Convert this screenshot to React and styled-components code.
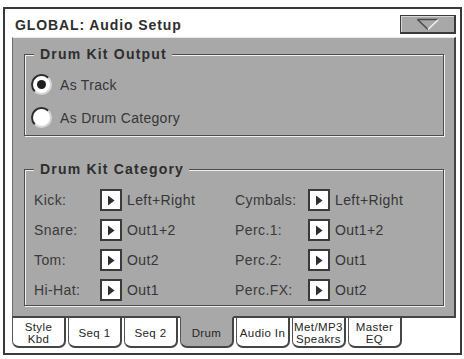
import styled, { createGlobalStyle } from "styled-components"

const GlobalStyle = createGlobalStyle`
  html, body {
    margin: 0;
    padding: 0;
    background: #fff;
  }

  body {
    font-family: "Liberation Sans", Arial, sans-serif;
    color: #363636;
  }
`

const PANEL_GRAY = "#a8a8a8"

const Screen = styled.div`
  width: 464px;
  height: 359px;
  box-sizing: border-box;
  padding: 7px 2px 0 3px;
`

const Frame = styled.div`
  width: 459px;
  height: 348px;
  box-sizing: border-box;
  border: 2px solid #3a3a3a;
  background: #fff;
  display: flex;
  flex-direction: column;
`

const Header = styled.header`
  height: 28px;
  flex-shrink: 0;
  display: flex;
  align-items: flex-start;
  justify-content: space-between;
  padding: 0 4px 0 10px;
`

const Title = styled.h1`
  margin: 8px 0 0;
  font-size: 14px;
  line-height: 16px;
  font-weight: bold;
  letter-spacing: 0.9px;
  color: #2e2e2e;
`

const MenuButton = styled.button`
  width: 56px;
  height: 19px;
  margin-top: 6px;
  padding: 0;
  box-sizing: border-box;
  background: ${PANEL_GRAY};
  border: 1px solid #3a3a3a;
  border-right-width: 2px;
  border-bottom-width: 2px;
  box-shadow: inset 1px 1px 0 #d8d8d8;
  display: flex;
  align-items: center;
  justify-content: center;
`

const Panel = styled.main`
  height: 281px;
  flex-shrink: 0;
  box-sizing: border-box;
  margin: 0 4px 0 7px;
  background: ${PANEL_GRAY};
  border-top: 1px solid #e8e8e8;
  border-left: 1px solid #6c6c6c;
  border-right: 2px solid #454545;
  border-bottom: 2px solid #454545;
  padding: 8px 10px 0 11px;
  display: flex;
  flex-direction: column;
`

const Group = styled.fieldset`
  margin: ${(p) => (p.$first ? "0" : "25px 0 0")};
  padding: ${(p) => p.$pad};
  min-width: 0;
  border: 1px solid #4c4c4c;
  box-shadow: inset 1px 1px 0 #f0f0f0, 1px 1px 0 #f0f0f0;
`

const Legend = styled.legend`
  padding: 0 5px 0 6px;
  font-size: 14px;
  line-height: 17px;
  font-weight: bold;
  letter-spacing: 1.2px;
  color: #2e2e2e;
  background: ${PANEL_GRAY};
`

const RadioRow = styled.label`
  height: 33px;
  display: flex;
  align-items: center;
  gap: 8px;
  font-size: 14px;
  letter-spacing: 0.3px;
`

const RadioDot = styled.span`
  width: 21px;
  height: 21px;
  margin-left: -3px;
  box-sizing: border-box;
  border-radius: 50%;
  background: #fff;
  border: 2px solid;
  border-color: #2c2c2c #d6d6d6 #d6d6d6 #2c2c2c;
  display: flex;
  align-items: center;
  justify-content: center;

  &::after {
    content: "";
    width: 9px;
    height: 9px;
    border-radius: 50%;
    background: #1e1e1e;
    display: ${(p) => (p.$checked ? "block" : "none")};
  }
`

const CategoryGrid = styled.div`
  display: grid;
  grid-template-columns: 66px 135px 73px 1fr;
  grid-auto-rows: 30px;
  align-items: center;
  font-size: 14px;
  letter-spacing: 0.4px;
`

const Label = styled.span`
  color: #3a3a3a;
`

const Select = styled.span`
  display: flex;
  align-items: center;
  gap: 5px;
`

const ArrowBox = styled.span`
  width: 22px;
  height: 22px;
  box-sizing: border-box;
  border: 2px solid #3a3a3a;
  background: #fff;
  display: flex;
  align-items: center;
  justify-content: center;
`

const TabBar = styled.nav`
  margin: -2px 0 0 7px;
  height: 32px;
  display: flex;
  gap: 2px;
`

const Tab = styled.div`
  width: 54px;
  height: 32px;
  box-sizing: border-box;
  background: ${(p) => (p.$active ? PANEL_GRAY : "#fff")};
  border-top: 2px solid ${(p) => (p.$active ? PANEL_GRAY : "#454545")};
  border-left: 1px solid #555;
  border-right: 2px solid #454545;
  border-bottom: 2px solid #454545;
  border-radius: 0 0 7px 7px;
  padding-top: 1px;
  display: flex;
  flex-direction: column;
  align-items: center;
  justify-content: center;
  font-size: 11.5px;
  line-height: 12px;
  letter-spacing: 0.4px;
  color: #262626;
`

function Radio({ checked, children }) {
  return (
    <RadioRow>
      <RadioDot $checked={checked} />
      {children}
    </RadioRow>
  )
}

function Selector({ value }) {
  return (
    <Select>
      <ArrowBox>
        <svg width="8" height="11" viewBox="0 0 8 11">
          <path d="M1 0.5 L7.5 5.5 L1 10.5 Z" fill="#2e2e2e" />
        </svg>
      </ArrowBox>
      {value}
    </Select>
  )
}

const rows = [
  ["Kick:", "Left+Right", "Cymbals:", "Left+Right"],
  ["Snare:", "Out1+2", "Perc.1:", "Out1+2"],
  ["Tom:", "Out2", "Perc.2:", "Out1"],
  ["Hi-Hat:", "Out1", "Perc.FX:", "Out2"],
]

const tabs = [
  ["Style", "Kbd"],
  ["Seq 1"],
  ["Seq 2"],
  ["Drum"],
  ["Audio In"],
  ["Met/MP3", "Speakrs"],
  ["Master", "EQ"],
]

export default function App() {
  return (
    <Screen>
      <GlobalStyle />
      <Frame>
        <Header>
          <Title>GLOBAL: Audio Setup</Title>
          <MenuButton aria-label="Menu">
            <svg width="24" height="13" viewBox="0 0 24 13">
              <path d="M1.5 1.5 H22.5" stroke="#4a4a4a" strokeWidth="1.5" fill="none" />
              <path d="M1.5 1.5 L12 11.5" stroke="#4a4a4a" strokeWidth="1.5" fill="none" />
              <path d="M22.5 1.5 L12 11.5" stroke="#f2f2f2" strokeWidth="1.5" fill="none" />
            </svg>
          </MenuButton>
        </Header>

        <Panel>
          <Group $first $pad="5px 9px 1px">
            <Legend>Drum Kit Output</Legend>
            <Radio checked>As Track</Radio>
            <Radio>As Drum Category</Radio>
          </Group>

          <Group $pad="7px 9px 0">
            <Legend>Drum Kit Category</Legend>
            <CategoryGrid>
              {rows.map(([l1, v1, l2, v2]) => [
                <Label key={l1}>{l1}</Label>,
                <Selector key={l1 + "v"} value={v1} />,
                <Label key={l2}>{l2}</Label>,
                <Selector key={l2 + "v"} value={v2} />,
              ])}
            </CategoryGrid>
          </Group>
        </Panel>

        <TabBar>
          {tabs.map((lines) => (
            <Tab key={lines.join(" ")} $active={lines[0] === "Drum"}>
              {lines.map((line) => (
                <span key={line}>{line}</span>
              ))}
            </Tab>
          ))}
        </TabBar>
      </Frame>
    </Screen>
  )
}
